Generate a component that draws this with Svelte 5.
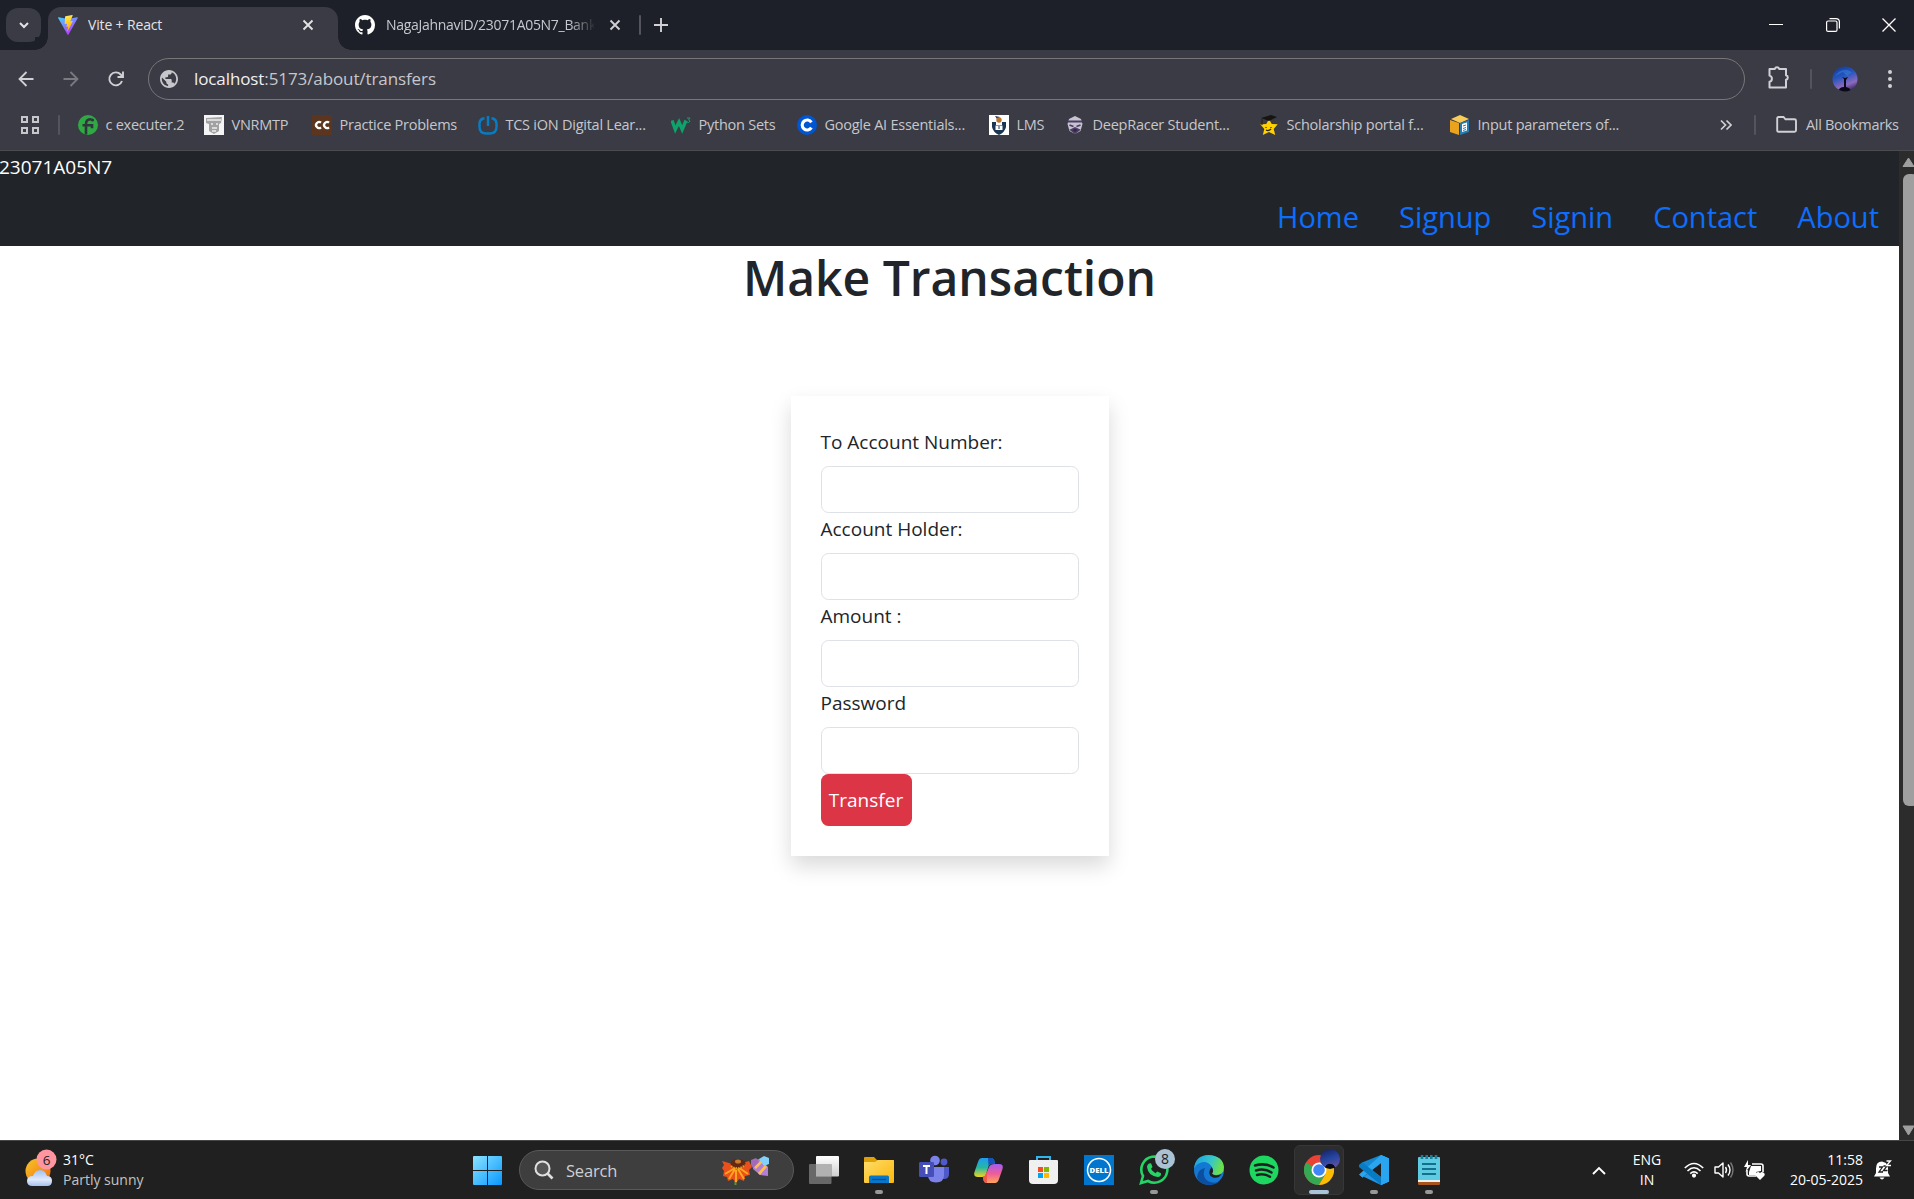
<script>
  const bookmarks = [
    { icon: 'exec', label: 'c executer.2' },
    { icon: 'vnr', label: 'VNRMTP' },
    { icon: 'cc', label: 'Practice Problems' },
    { icon: 'tcs', label: 'TCS iON Digital Lear...' },
    { icon: 'w3', label: 'Python Sets' },
    { icon: 'coursera', label: 'Google AI Essentials...' },
    { icon: 'lms', label: 'LMS' },
    { icon: 'racer', label: 'DeepRacer Student...' },
    { icon: 'star', label: 'Scholarship portal f...' },
    { icon: 'box', label: 'Input parameters of...' }
  ];
  const links = ['Home', 'Signup', 'Signin', 'Contact', 'About'];
  const fields = [
    { label: 'To Account Number:', type: 'text' },
    { label: 'Account Holder:', type: 'text' },
    { label: 'Amount :', type: 'text' },
    { label: 'Password', type: 'password' }
  ];
  const apps = ['tasks', 'files', 'teams', 'copilot', 'store', 'dell', 'whatsapp', 'edge', 'spotify', 'chrome', 'code', 'notepad'];
  const running = ['files', 'whatsapp', 'code', 'notepad'];
</script>

<div class="screen">
  <header class="tabs">
    <button class="tab-search" aria-label="Search tabs">
      <svg width="12" height="12" viewBox="0 0 12 12"><path d="M2 4l4 4 4-4" fill="none" stroke="#e3e3e6" stroke-width="2" /></svg>
    </button>
    <div class="tab active">
      <svg class="fav" width="20" height="20" viewBox="0 0 20 20">
        <defs>
          <linearGradient id="v1" x1="0" y1="0" x2=".6" y2="1"><stop offset="0" stop-color="#41d1ff" /><stop offset="1" stop-color="#bd34fe" /></linearGradient>
          <linearGradient id="v2" x1=".4" y1="0" x2=".6" y2="1"><stop offset="0" stop-color="#ffea83" /><stop offset=".2" stop-color="#ffdd35" /><stop offset="1" stop-color="#ffa800" /></linearGradient>
        </defs>
        <path d="M19.8 3L10.4 19.7q-.4.6-.8 0L.1 3q-.3-.8.6-.7L10 4l9.100-1.700q1-.1.7.7z" fill="url(#v1)" />
        <path d="M14.300 0L7.500 1.300q-.4.1-.4.400L6.700 8.700q0 .5.5.4l1.900-.4-.6 2.800q-.1.500.5.400l1.200-.4-.9 4.300q-.1.700.5.200l5-9.700q.2-.5-.5-.4l-2 .4L14.700.6q.1-.6-.4-.6z" fill="url(#v2)" />
      </svg>
      <span class="title">Vite + React</span>
      <svg class="x" width="12" height="12" viewBox="0 0 12 12"><path d="M1.500 1.500l9 9m0-9l-9 9" stroke="#e3e3e6" stroke-width="1.900" /></svg>
    </div>
    <div class="tab second">
      <svg class="fav" width="20" height="20" viewBox="0 0 16 16"><path fill="#fff" d="M8 0C3.580 0 0 3.580 0 8c0 3.540 2.290 6.530 5.470 7.590.4.070.55-.17.55-.38 0-.19-.01-.82-.01-1.490-2.010.37-2.530-.49-2.690-.94-.09-.23-.48-.94-.82-1.130-.28-.15-.68-.52-.01-.53.63-.01 1.080.58 1.230.82.72 1.210 1.870.87 2.330.66.070-.52.28-.87.51-1.070-1.780-.2-3.640-.89-3.640-3.950 0-.87.31-1.590.82-2.150-.08-.2-.36-1.020.08-2.120 0 0 .67-.21 2.200.82.64-.18 1.320-.27 2-.27s1.360.09 2 .27c1.530-1.040 2.200-.82 2.200-.82.44 1.100.16 1.920.08 2.120.51.56.82 1.270.82 2.150 0 3.070-1.870 3.750-3.650 3.950.29.25.54.73.54 1.480 0 1.070-.01 1.930-.01 2.200 0 .21.15.46.55.38A8.010 8.010 0 0 0 16 8c0-4.420-3.580-8-8-8z" /></svg>
      <span class="title">NagaJahnaviD/23071A05N7_Bank</span>
      <svg class="x" width="12" height="12" viewBox="0 0 12 12"><path d="M1.500 1.500l9 9m0-9l-9 9" stroke="#d0d0d5" stroke-width="1.900" /></svg>
    </div>
    <i class="sep"></i>
    <svg class="plus" width="14" height="14" viewBox="0 0 14 14"><path d="M7 0v14M0 7h14" stroke="#d0d0d5" stroke-width="1.900" /></svg>
    <div class="window-controls">
      <svg width="14" height="14" viewBox="0 0 14 14"><path d="M0 6.500h14" stroke="#fff" /></svg>
      <svg width="14" height="14" viewBox="0 0 14 14" fill="none" stroke="#fff" stroke-width="1.200"><rect x=".6" y="3" width="10.400" height="10.400" rx="1.500" /><path d="M3.500.6h6.500q3.400 0 3.400 3.400v6.500" /></svg>
      <svg width="14" height="14" viewBox="0 0 14 14"><path d="M.5.5l13 13m0-13l-13 13" stroke="#fff" stroke-width="1.300" /></svg>
    </div>
  </header>

  <div class="toolbar">
    <svg class="nav" width="20" height="20" viewBox="0 0 20 20" fill="none" stroke="#d0d0d5" stroke-width="1.800"><path d="M17.500 10H3.500m7-7l-7 7 7 7" /></svg>
    <svg class="nav" width="20" height="20" viewBox="0 0 20 20" fill="none" stroke="#797a82" stroke-width="1.800"><path d="M2.500 10h14m-7-7l7 7-7 7" /></svg>
    <svg class="nav" width="20" height="20" viewBox="0 0 20 20" fill="none" stroke="#d0d0d5" stroke-width="1.900"><path d="M16 12a6.500 6.500 0 1 1-1.300-6.500L17 8M17 2.500V8h-5.500" /></svg>
    <div class="omnibox">
      <svg width="18" height="18" viewBox="2 2 20 20"><path fill="#c7c7cb" d="M12 2C6.480 2 2 6.480 2 12s4.480 10 10 10 10-4.480 10-10S17.520 2 12 2zm-1 17.930c-3.950-.49-7-3.850-7-7.930 0-.62.080-1.210.210-1.790L9 15v1c0 1.100.9 2 2 2v1.930zm6.900-2.540c-.26-.81-1-1.390-1.900-1.390h-1v-3c0-.55-.45-1-1-1H8v-2h2c.55 0 1-.45 1-1V7h2c1.100 0 2-.9 2-2v-.41c2.930 1.190 5 4.060 5 7.410 0 2.080-.8 3.970-2.100 5.390z" /></svg>
      <span class="url"><b>localhost</b>:5173/about/transfers</span>
    </div>
    <svg class="puzzle" width="24" height="26" viewBox="0 0 24 26" fill="none" stroke="#d0d0d5" stroke-width="2"><path d="M2.500 5h5.300a2.300 2.300 0 0 1 4.400 0H19v6.300a2.300 2.300 0 0 1 0 4.500V23.500H2.500v-5.700a3.200 3.200 0 0 0 0-6.200z" stroke-linejoin="round" /></svg>
    <i class="sep"></i>
    <svg class="avatar" width="26" height="26" viewBox="0 0 26 26">
      <defs>
        <linearGradient id="sky" x1=".2" y1="0" x2=".6" y2="1"><stop offset="0" stop-color="#123c99" /><stop offset=".4" stop-color="#2556bd" /><stop offset=".75" stop-color="#8d69bd" /><stop offset="1" stop-color="#30275b" /></linearGradient>
        <clipPath id="round"><circle cx="13" cy="13" r="12.500" /></clipPath>
      </defs>
      <g clip-path="url(#round)"><path fill="url(#sky)" d="M0 0h26v26H0z" /><path d="M3 10Q12-2 23 9l-3-3-5 4-4-4z" fill="#3b82e0" opacity=".5" /><path d="M6 26q1-5 6-5V13l-2-2 3 1 3-1-2 3v7q5 1 5 5z" fill="#0a0917" /></g>
    </svg>
    <svg class="dots" width="6" height="22" viewBox="0 0 6 22" fill="#d0d0d5"><circle cx="3" cy="4" r="2" /><circle cx="3" cy="11" r="2" /><circle cx="3" cy="18" r="2" /></svg>
  </div>

  <nav class="bookmarks">
    <svg class="grid" width="18" height="18" viewBox="0 0 18 18" fill="none" stroke="#c7c7cb" stroke-width="2"><path d="M1 1h5v5H1zM12 1h5v5h-5zM1 12h5v5H1zM12 12h5v5h-5z" /></svg>
    <i class="sep"></i>
    <div class="list">
      {#each bookmarks as b}
        <div class="bookmark">
          <svg width="20" height="20" viewBox="0 0 20 20">
            {#if b.icon === 'exec'}
              <circle cx="10" cy="10" r="10" fill="#2fa944" /><path d="M8 19.500V9q0-5 5.500-4.800M4.500 10.200h9.500v3" fill="none" stroke="#30343b" stroke-width="2.600" /><circle cx="14.500" cy="5" r="1.600" fill="#30343b" />
            {:else if b.icon === 'vnr'}
              <path fill="#f4f4f4" d="M0 0h20v20H0z" /><path fill="#a2a2a2" d="M2 3l16-1-1 6-2 1v7l-5 3-5-3V9L2 8z" /><path d="M3 5h14M7 9h2m3 0h2M8 13h5m-5 3h4" stroke="#ededed" stroke-width="1.500" />
            {:else if b.icon === 'cc'}
              <path fill="#5b351e" d="M0 0h20v20H0z" /><path d="M9 7.700a3 3 0 1 0 0 4.600M17 7.700a3 3 0 1 0 0 4.600" fill="none" stroke="#fff" stroke-width="2.300" />
            {:else if b.icon === 'tcs'}
              <path d="M6.500 3.500H5q-3.500 1.500-3.500 5V12q0 6.500 7 6.500h3q7 0 7-6.500V8.500q0-3.500-3.500-5h-1.500M10 1v10" fill="none" stroke="#087bc1" stroke-width="2.500" />
            {:else if b.icon === 'w3'}
              <path d="M1 5.500l3.300 9L8 7l3.200 7.500L15 5.500" fill="none" stroke="#0da36b" stroke-width="3.300" /><path d="M16 3h3l-1.500 2q2 .5 1 2-1 1-2.500.2" fill="none" stroke="#0da36b" />
            {:else if b.icon === 'coursera'}
              <circle cx="10" cy="10" r="10" fill="#0056d2" /><path d="M14.400 7.300a5 5 0 1 0 0 5.400" fill="none" stroke="#fff" stroke-width="3.100" />
            {:else if b.icon === 'lms'}
              <path fill="#fff" d="M0 0h20v20H0z" /><path fill="#1b3554" d="M3 7h4v3h6V7h4v5q-1 5-7 8-6-3-7-8zM6 1l5 1-3 2z" /><circle cx="10" cy="5" r="2.700" fill="#b9752d" /><path fill="#fff" d="M6.500 10.500h7V15h-7z" /><path d="M10 11v3" stroke="#1b3554" />
            {:else if b.icon === 'racer'}
              <path d="M4 4l6-3 6 3 1.500 5-2 7-5.500 3-5.500-3-2-7z" fill="#c7c3d0" /><path d="M3 6.500h14M4.500 10l4 1.500m7-1.500l-4 1.500M6 15l4-2 4 2-4 3z" stroke="#4c3d66" stroke-width="1.800" fill="#30243f" />
            {:else if b.icon === 'star'}
              <path d="M10 4l2.700 5 6 .3-4 4.700 1.500 6-6.200-3-6.200 3 1.500-6-4-4.700 6-.3z" fill="#ffd200" /><path d="M2 3l10-3 6 2-8 4z" fill="#171411" /><path d="M3 4v6m4 2v1m5-1v1m-5 2q2.500 1.500 5-1" stroke="#2b2510" stroke-width="1.200" fill="none" />
            {:else}
              <path d="M1 4l9-4 9 4-9 4z" fill="#f9cb58" /><path d="M0 5l9 3v12l-9-3z" fill="#eba31d" /><path d="M10 8l9-3v12l-9 3z" fill="#247eb5" /><path d="M12 9l5-1.500v8L12 17z" fill="#fff" /><path d="M13 11l3-1m-3 3.500l3-1m-3 3l3-1" stroke="#247eb5" />
            {/if}
          </svg>
          <span>{b.label}</span>
        </div>
      {/each}
    </div>
    <svg class="more" width="12" height="12" viewBox="0 0 12 12"><path d="M1 1.500L5.500 6 1 10.500M6.500 1.500L11 6l-4.500 4.500" fill="none" stroke="#d0d0d5" stroke-width="1.700" /></svg>
    <i class="sep"></i>
    <svg class="folder" width="21" height="17" viewBox="0 0 21 17"><path d="M1.200 2.500q0-1.500 1.300-1.500h5l2 2.300h9q1.500 0 1.500 1.500v9.500q0 1.500-1.500 1.500h-16q-1.300 0-1.300-1.500z" fill="none" stroke="#d0d0d5" stroke-width="1.900" /></svg>
    <span class="all">All Bookmarks</span>
  </nav>

  <div class="viewport">
    <div class="page">
      <div class="site-header">
        <div class="brand">23071A05N7</div>
        <ul>
          {#each links as link}<li><a href="#{link}">{link}</a></li>{/each}
        </ul>
      </div>
      <h1>Make Transaction</h1>
      <form class="card">
        {#each fields as f, i}
          <label for="f{i}">{f.label}</label>
          <input id="f{i}" type={f.type} />
        {/each}
        <button type="button" class="transfer">Transfer</button>
      </form>
    </div>
    <div class="scrollbar">
      <svg width="15" height="11" viewBox="0 0 15 11"><path d="M9.500 1l5.500 8.500H4z" fill="#9f9f9f" stroke="#9f9f9f" stroke-linejoin="round" /></svg>
      <div class="thumb"></div>
      <svg width="15" height="11" viewBox="0 0 15 11"><path d="M9.500 10l5.500-9H4z" fill="#9f9f9f" stroke="#9f9f9f" stroke-linejoin="round" /></svg>
    </div>
  </div>

  <footer class="taskbar">
    <div class="weather">
      <svg width="36" height="42" viewBox="0 0 36 42">
        <defs>
          <linearGradient id="sun" x1="0" y1="0" x2="1" y2="1"><stop offset="0" stop-color="#f8c62a" /><stop offset="1" stop-color="#f06a0c" /></linearGradient>
          <linearGradient id="cloud" x1="0" y1="0" x2="0" y2="1"><stop offset="0" stop-color="#9fc0f4" /><stop offset=".6" stop-color="#e0eafa" /><stop offset="1" stop-color="#a5c0f0" /></linearGradient>
        </defs>
        <circle cx="13" cy="23" r="12.500" fill="url(#sun)" />
        <path d="M7.500 38q-5.500 0-5.500-5t6-5q2-6 7-6t7 6q5 0 5 5t-5 5z" fill="url(#cloud)" />
        <circle cx="21.500" cy="11.500" r="10" fill="#ff959f" />
        <text x="21.500" y="16.500" text-anchor="middle" font-size="13.500" fill="#1e1e1e">6</text>
      </svg>
      <div class="lines"><span>31°C</span><span class="dim">Partly sunny</span></div>
    </div>
    <svg class="start" width="29" height="29" viewBox="0 0 29 29">
      <defs><linearGradient id="win" x1="0" y1="0" x2="1" y2="1"><stop offset="0" stop-color="#8be4ff" /><stop offset="1" stop-color="#0897ff" /></linearGradient></defs>
      <path d="M1 0h13v14H0V1q0-1 1-1zM15 0h13q1 0 1 1v13H15zM0 15h14v14H1q-1 0-1-1zM15 15h14v13q0 1-1 1H15z" fill="url(#win)" />
    </svg>
    <div class="search">
      <svg width="20" height="20" viewBox="0 0 20 20"><circle cx="8.500" cy="8.500" r="7" fill="#555" stroke="#e0e0e0" stroke-width="2" /><path d="M13.500 13.500l5 5" stroke="#e0e0e0" stroke-width="2.600" /></svg>
      <span>Search</span>
      <svg class="bloom" width="48" height="30" viewBox="0 0 48 30">
        <path d="M12.500 22h2v7h-2z" fill="#4e9c2a" />
        <path d="M14 9L0 5l2 4-2 3 2 3-1 5 4 1 1 4 5-2 3 4 3-4 5 2 1-5 5-1-1-5 3-3-3-6z" fill="#e9501b" />
        <path d="M13 12l-10 6m10-5L7 23m7-9v12m2-13l6 10m-6-12l10 7" stroke="#ffa61c" stroke-width="2" />
        <ellipse cx="16" cy="7.500" rx="7.500" ry="4.500" fill="#642713" /><path d="M9 10q7 5 14-1" stroke="#e3a021" stroke-width="2" stroke-dasharray="1.500 1" fill="none" /><ellipse cx="16" cy="5.500" rx="3" ry="2" fill="#c87c31" />
        <path d="M31 4l7-1 8 8v9l-8-1-7-6z" fill="#b27fd4" /><path d="M33 12l7-7m-3 13l7-8" stroke="#ffbf47" stroke-width="2.700" /><path d="M37 3l5-3 5 2v6l-5 2z" fill="#83d1f8" /><path d="M29 4l5-2 3 4-6 6-2-3z" fill="#a26bb8" />
      </svg>
    </div>
    <div class="apps">
      {#each apps as app}
        <div class="app" class:focused={app === 'chrome'}>
          <svg width="30" height="30" viewBox="0 0 30 30">
            {#if app === 'tasks'}
              <defs><linearGradient id="tv" x2="0" y2="1"><stop stop-color="#fff" /><stop offset="1" stop-color="#cfcfcf" /></linearGradient></defs>
              <rect x="7" y="1" width="23" height="20.500" rx="1" fill="url(#tv)" /><rect x="0" y="9" width="22.500" height="20" rx="1" fill="#767676" opacity=".85" /><path d="M7 9h15.500v12.500H7z" fill="#b1b1b1" />
            {:else if app === 'files'}
              <defs><linearGradient id="fo" x2="1" y2="1"><stop stop-color="#ffdc69" /><stop offset="1" stop-color="#fbb70c" /></linearGradient></defs>
              <path d="M0 3q0-1 1-1h9l3 3h16q1 0 1 1v10H0z" fill="#dda009" /><path d="M0 7h11l3-2h15q1 0 1 1v21q0 1-1 1H1q-1 0-1-1z" fill="url(#fo)" /><path d="M5 28v-6q0-1.500 1.500-1.500h17q1.500 0 1.500 1.500v6z" fill="#0877c9" /><path d="M8 24.500h14" stroke="#064c88" stroke-width="1.200" />
            {:else if app === 'teams'}
              <circle cx="25" cy="7" r="3.400" fill="#5059c9" /><circle cx="16" cy="5.500" r="4.800" fill="#7b83eb" /><path d="M20 12h10v7q0 5-5 5h-3z" fill="#5059c9" /><path d="M9 12h16v8q0 7.500-8 7.500T9 20z" fill="#7b83eb" /><rect x="0" y="7" width="15" height="15" rx="1.300" fill="#464eb8" /><path d="M4 11h7M7.500 11v8" stroke="#fff" stroke-width="2" />
            {:else if app === 'copilot'}
              <defs><linearGradient id="c1" x2="0" y2="1"><stop stop-color="#1e9cf0" /><stop offset=".5" stop-color="#25b7a5" /><stop offset="1" stop-color="#f1d51d" /></linearGradient><linearGradient id="c2" x2="0" y2="1"><stop stop-color="#a45cf2" /><stop offset=".5" stop-color="#ee5c9a" /><stop offset="1" stop-color="#ffa45a" /></linearGradient></defs>
              <path d="M8 3h9q3 0 3.500 3.500L21 9h-4q-2 0-3 4l-2 6q-1 3-4 3H4q-5 0-3.500-5L4 7q1.200-4 4-4z" fill="url(#c1)" /><path d="M21 9h4q5 0 3.500 5L25 24q-1.200 4-4 4h-8q-3 0-3.500-3L9 22q2 0 3-3l3-7q1-3 6-3z" fill="url(#c2)" /><path d="M14 3h3q3 0 3.500 3.500L21 9h-4q-2 0-2.500 2z" fill="#1654bd" /><path d="M9 22q2 0 3-3l1-3v12q-3 0-3.500-3z" fill="#f15b4c" />
            {:else if app === 'store'}
              <path d="M8 7V2h13v5" fill="none" stroke="#32b5ec" stroke-width="2" /><path d="M0 6q0-1 1-1h27q1 0 1 1v19q0 4-4 4H4q-4 0-4-4z" fill="#f0f0f0" /><path d="M9 12h5v5H9z" fill="#f25022" /><path d="M15 12h5v5h-5z" fill="#7fba00" /><path d="M9 18h5v5H9z" fill="#00a4ef" /><path d="M15 18h5v5h-5z" fill="#ffb900" />
            {:else if app === 'dell'}
              <path fill="#0076ce" d="M0 0h30v30H0z" /><circle cx="15" cy="15" r="11.500" fill="none" stroke="#fff" stroke-width="1.500" /><text x="15" y="18" text-anchor="middle" font-size="7.500" font-weight="800" fill="#fff" textLength="19" lengthAdjust="spacingAndGlyphs">DELL</text>
            {:else if app === 'whatsapp'}
              <path d="M2 28l2-7A13 13 0 1 1 9 26z" fill="none" stroke="#25d366" stroke-width="2.600" /><path d="M10 8.500l2-.2 1.500 3.700-1.500 1.800q1.500 3 4.500 4.500l1.800-1.700 3.700 1.700q.5 3.500-3.500 3.700Q9 20.500 8 12q0-2.500 2-3.500z" fill="#25d366" />
            {:else if app === 'edge'}
              <defs><linearGradient id="e1" x2="1" y2=".3"><stop stop-color="#1b9de2" /><stop offset=".6" stop-color="#35c6cb" /><stop offset="1" stop-color="#6be04b" /></linearGradient></defs>
              <circle cx="15" cy="15" r="15" fill="#1378d4" /><path d="M0 14Q1 0 15 0q14 1 15 12 0 8-8 8-5 0-4-3 2-2 0-5-5-7-12-4-4 1-6 6z" fill="url(#e1)" /><path d="M11 13q-4 10 5 14 6 2 10-1-4 4-11 4Q5 29 3 22q1-8 8-9z" fill="#0c4fa0" /><path d="M17.500 12q3 4 .5 6.500 3 3.500 9.500.500-3 5-8.500 3.500-7-3-1.500-10.500z" fill="#202020" />
            {:else if app === 'spotify'}
              <circle cx="15" cy="15" r="14.500" fill="#1ed760" /><path d="M6 10.500q10-3 18.500 2M7 15.500q8.500-2.500 15.500 2M8 20q7-2 13 1.800" fill="none" stroke="#202020" stroke-width="2.500" stroke-linecap="round" />
            {:else if app === 'chrome'}
              <circle cx="15" cy="15" r="15" fill="#ea4335" /><path d="M15 15L2 7.500A15 15 0 0 0 15 30l6.500-11.300z" fill="#34a853" /><path d="M15 7.500h13A15 15 0 0 1 15 30l6.500-11z" fill="#fbbc04" /><circle cx="15" cy="15" r="7.500" fill="#fff" /><circle cx="15" cy="15" r="5.800" fill="#4285f4" />
            {:else if app === 'code'}
              <path d="M22 0l8 3.500v23L22 30 1 11l-1-1 3-2.500z" fill="#1687d2" /><path d="M22 0v30L0 19.500l3.500 3L22 8z" fill="#2497e5" /><path d="M22 8v14l-9-7zM0 12.500L3 15l-3 3z" fill="#202020" /><path d="M0 19.500L22 0l8 3.500v23L22 30V8L3.500 22.500z" fill="#2aa5ef" /><path d="M0 10.500L3.500 7.500 22 22v8L0 12z" fill="#087bc5" /><path d="M22 0l8 3.500v23L22 30z" fill="#2aa5ef" />
            {:else}
              <path d="M4 3q0-1 1-1h20q1 0 1 1v22H4z" fill="#5ecbe3" /><path d="M4 25h22v2H4z" fill="#f1f1f1" /><path d="M4 27h22v1.500q0 1.500-1 1.500H5q-1 0-1-1.500z" fill="#a7551c" /><path d="M8 0v4m4.700-4v4m4.600-4v4M22 0v4" stroke="#18809c" stroke-width="2.600" /><path d="M8 9h14M8 14h14M8 19h14" stroke="#13708d" stroke-width="2" />
            {/if}
          </svg>
          {#if running.includes(app)}<i class="dot"></i>{/if}
          {#if app === 'chrome'}<i class="dot wide"></i><i class="badge photo"></i>{/if}
          {#if app === 'whatsapp'}<b class="badge">8</b>{/if}
        </div>
      {/each}
    </div>
    <div class="tray">
      <svg class="up" width="14" height="9" viewBox="0 0 14 9"><path d="M1 8l6-6 6 6" fill="none" stroke="#fff" stroke-width="1.900" /></svg>
      <div class="lang"><span>ENG</span><span>IN</span></div>
      <svg class="wifi" width="20" height="16" viewBox="0 0 20 16" fill="none" stroke="#fff" stroke-width="1.600"><path d="M.8 6q9.200-9 18.400 0M3.500 9q6.500-6.500 13 0M6.300 11.700q3.700-3.500 7.400 0" /><circle cx="10" cy="13.600" r="1.300" fill="#fff" /></svg>
      <svg class="speaker" width="20" height="18" viewBox="0 0 20 18" fill="none" stroke="#fff" stroke-width="1.400"><path d="M1 6h3.500L9 2v14l-4.500-4H1z" stroke-linejoin="round" /><path d="M11.500 6q2 3 0 6M14 3.500q4 5.500 0 11" /><path d="M16.500 1.500q5 7.500 0 15" stroke="#777" /></svg>
      <svg class="battery" width="21" height="20" viewBox="0 0 21 20"><path d="M8 4h9q2 0 2 2v6M3 10v4q0 2 2 2h7" fill="none" stroke="#fff" stroke-width="1.600" /><path d="M7 6h10v5l-5 1 1 3H5v-3z" fill="#fff" /><path d="M4 0L0 7h3L1.500 12 7 5H4z" fill="#fff" /><path d="M16 20l-4.300-4.200a2.400 2.400 0 0 1 4.300-2.500 2.400 2.400 0 0 1 4.300 2.500z" fill="#fff" /></svg>
      <div class="clock"><span>11:58</span><span>20-05-2025</span></div>
      <svg class="bell" width="18" height="20" viewBox="0 0 18 20"><path d="M8 1.500q-6 0-6 7V13l-2 3.500h16L14 13V8l-2-5zM5.500 17.500q2.500 4 5 0z" fill="#fff" /><path d="M5 7h3.500L5 12h4M9.500 6h3.500l-3.500 4.500h4" fill="none" stroke="#202020" stroke-width="1.300" /><path d="M12.500 1h4l-4 4.500h4.500" fill="none" stroke="#fff" stroke-width="1.300" /></svg>
    </div>
  </footer>
</div>

<style>
  :global(body) { margin: 0; overflow: hidden; }
  * { box-sizing: border-box; }
  svg { display: block; flex: none; }
  .screen { width: 1914px; height: 1199px; display: flex; flex-direction: column; font-family: "Open Sans", "Noto Sans", sans-serif; background: #fff; overflow: hidden; }
  button { font-family: inherit; border: 0; padding: 0; }
  .sep { flex: none; width: 2px; height: 20px; border-radius: 1px; background: #53545e; }

  .tabs { height: 50px; flex: none; background: #1d2028; display: flex; align-items: center; padding-left: 6px; color: #e3e3e6; }
  .tab-search { width: 35px; height: 34px; border-radius: 12px; background: #3a3b44; display: grid; place-items: center; }
  .tab { display: flex; align-items: center; height: 43px; margin-top: 7px; padding-bottom: 7px; }
  .title { font-size: 14px; letter-spacing: -.15px; line-height: 20px; white-space: nowrap; overflow: hidden; }
  .active { position: relative; width: 290px; margin-left: 7px; padding-left: 10px; background: #3a3b44; border-radius: 13px 13px 0 0; }
  .active::before, .active::after { content: ""; position: absolute; bottom: 0; width: 13px; height: 13px; }
  .active::before { left: -13px; background: radial-gradient(circle at 0 0, #1d2028 12.500px, #3a3b44 13px); }
  .active::after { right: -13px; background: radial-gradient(circle at 100% 0, #1d2028 12.500px, #3a3b44 13px); }
  .active .title { margin-left: 10px; width: 214px; }
  .active .x { margin-left: 0; }
  .second { margin-left: 17px; width: 284px; }
  .second .title { margin-left: 11px; width: 208px; color: #c7c8cf; letter-spacing: -.3px; mask-image: linear-gradient(90deg, #000 88%, transparent 101%); }
  .second .x { margin-left: 15px; }
  .plus { margin-left: 13px; }
  .window-controls { margin-left: auto; display: flex; gap: 42.500px; padding-right: 18px; }

  .toolbar { position: relative; height: 57px; flex: none; background: #3a3b44; display: flex; align-items: center; padding-left: 16px; }
  .nav { margin-right: 25px; }
  .omnibox { width: 1597px; height: 42px; margin-left: -3px; border: 1px solid #77777a; border-radius: 21px; display: flex; align-items: center; padding-left: 11px; gap: 16px; }
  .url { font-size: 17px; letter-spacing: -.1px; color: #c7c7cb; }
  .url b { font-weight: 400; color: #f0f0f2; }
  .puzzle { margin-left: 22px; margin-top: -4px; }
  .toolbar .sep { margin-left: 19px; }
  .avatar { margin-left: 20px; }
  .dots { margin-left: 29px; }

  .bookmarks { height: 44px; flex: none; background: #3a3b44; border-bottom: 1px solid #4b4c50; display: flex; align-items: center; padding: 0 0 8px 21px; color: #c7c7cb; font-size: 14.500px; white-space: nowrap; }
  .bookmarks .sep { margin-left: 19px; }
  .list { margin-left: 18px; width: 1562px; display: grid; grid-template-columns: 126px 108px 166px 193px 126px 192px 76px 194px 191px 190px; }
  .bookmark { display: flex; align-items: center; gap: 7.500px; letter-spacing: -.25px; line-height: 20px; }
  .more { margin-left: 80px; }
  .bookmarks .more + .sep { margin-left: 22px; }
  .folder { margin-left: 20px; }
  .all { margin-left: 9px; letter-spacing: -.3px; }

  .viewport { height: 989px; flex: none; display: flex; }
  .page { width: 1899px; display: flex; flex-direction: column; align-items: center; color: #212529; background: #fff; }
  .site-header { width: 1899px; height: 95px; background: #212529; color: #fff; }
  .brand { font-size: 19px; line-height: 30px; margin-left: -1px; padding-top: 1px; }
  ul { margin: 12px 0 0; padding: 0 20px 0 0; list-style: none; display: flex; justify-content: flex-end; gap: 40px; }
  a { font-size: 29px; line-height: 45px; color: #0d6efd; text-decoration: none; display: block; }
  h1 { margin: 2px 0 0; font-size: 48px; line-height: 60px; font-weight: 600; }
  .card { margin-top: 88px; width: 318px; height: 460px; padding: 30px; display: flex; flex-direction: column; align-items: flex-start; box-shadow: 0 10px 20px rgba(0, 0, 0, .15); }
  label { font-size: 19px; line-height: 30px; height: 40px; padding-top: 1px; }
  input { width: 258px; height: 47px; border: 1px solid #dee2e6; border-radius: 7.500px; background: #fff; padding: 0 15px; font-size: 19px; }
  .transfer { width: 91px; height: 52px; border-radius: 7.500px; background: #dc3545; color: #fff; font-size: 19px; }
  .scrollbar { width: 15px; background: #2c2c2c; padding: 6px 0 4px; display: flex; flex-direction: column; }
  .thumb { width: 15px; height: 632px; margin: 6px 0 auto 4px; border-radius: 6px; background: #9f9f9f; }
  .scrollbar { overflow: hidden; }

  .taskbar { height: 59px; flex: none; background: #202020; border-top: 1px solid #454647; display: flex; align-items: center; color: #fff; font-size: 14px; }
  .lines, .lang, .clock { display: flex; flex-direction: column; line-height: 20px; white-space: nowrap; }
  .weather { width: 473px; padding-left: 25px; display: flex; align-items: center; }
  .weather svg { margin-top: -3px; }
  .lines { margin-left: 2px; }
  .dim { color: #c3c3c3; }
  .search { width: 275px; height: 40px; margin-left: 17px; border: 1px solid #595959; border-radius: 20px; background: #3e3e3e; display: flex; align-items: center; padding-left: 14px; color: #d0d0d0; font-size: 16.500px; }
  .search span { margin-left: 12px; width: 156px; letter-spacing: -.2px; }
  .bloom { margin-top: 2px; }
  .apps { display: flex; gap: 5px; margin-left: 5px; }
  .app { position: relative; width: 50px; height: 50px; display: grid; place-items: center; border-radius: 6px; border: 1px solid transparent; }
  .focused { background: #2d2d2d; border-color: #373737; }
  .dot { position: absolute; bottom: 0; left: 20px; width: 8px; height: 4px; border-radius: 2px; background: #989898; }
  .wide { left: 14px; width: 20px; background: #a9c4d8; }
  .badge { position: absolute; top: 3px; left: 25px; width: 20px; height: 20px; border-radius: 50%; background: #abc2d5; color: #1b1b1b; font-size: 14px; font-weight: 400; line-height: 20px; text-align: center; }
  .photo { background: radial-gradient(circle at 50% 100%, #08091c 22%, transparent 25%), linear-gradient(160deg, #101f5b, #2846a3 50%, #75569f); }
  .tray { margin-left: auto; display: flex; align-items: center; padding-right: 22px; }
  .lang { width: 34px; margin-left: 24px; align-items: center; }
  .wifi { margin-left: 20px; }
  .speaker { margin-left: 10px; }
  .battery { margin-left: 10px; }
  .clock { margin-left: 20px; width: 78px; align-items: flex-end; }
  .bell { margin-left: 11px; }
</style>
